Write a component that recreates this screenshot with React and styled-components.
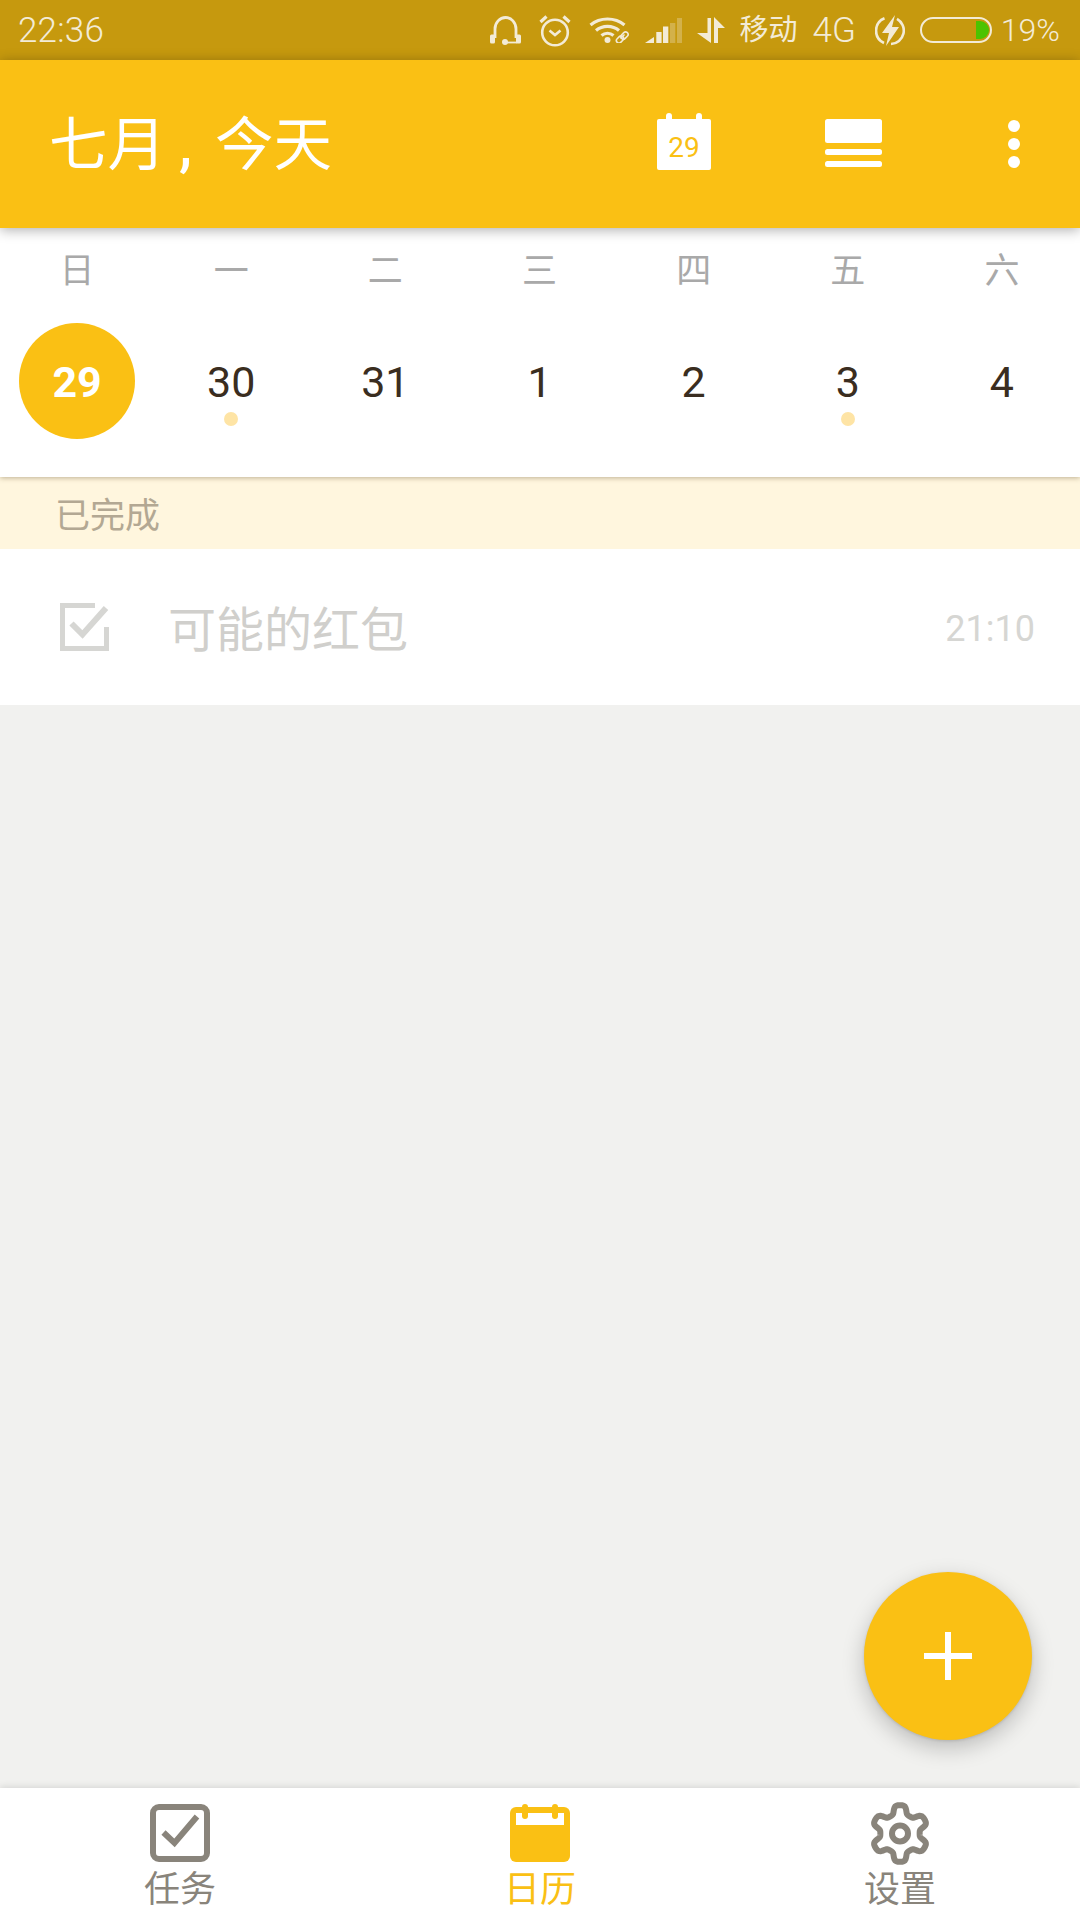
import React from 'react';
import styled, { createGlobalStyle } from 'styled-components';

const YELLOW = '#fac014';
const GREY_ICON = '#89847b';
const STATUS_INK = '#f3ebd6';

const GlobalStyle = createGlobalStyle`
  html, body {
    margin: 0;
    padding: 0;
    background: #f1f1ef;
  }
  body {
    font-family: Roboto, "Noto Sans CJK SC", sans-serif;
  }
`;

const Page = styled.div`
  position: relative;
  width: 1080px;
  height: 1920px;
  display: flex;
  flex-direction: column;
  overflow: hidden;
`;

const StatusBar = styled.div`
  height: 60px;
  flex: none;
  display: flex;
  align-items: center;
  justify-content: space-between;
  padding: 0 20px 0 18px;
  background: #c6990e;
  color: ${STATUS_INK};
`;

const StatusTime = styled.span`
  font-size: 35px;
  font-weight: 300;
  letter-spacing: 0.2px;
`;

const StatusGroup = styled.div`
  display: flex;
  align-items: center;
`;

const StatusSlot = styled.span`
  display: flex;
  align-items: center;
  margin-left: ${props => props.$gap || 0}px;
  font-size: ${props => props.$size || 32}px;
  font-weight: ${props => props.$weight || 300};
  line-height: 1;
`;

const Header = styled.header`
  position: relative;
  z-index: 3;
  height: 168px;
  flex: none;
  display: flex;
  align-items: center;
  padding: 0 60px 0 49px;
  background: ${YELLOW};
  box-shadow: 0 2px 12px rgba(0, 0, 0, 0.32);
`;

const Title = styled.h1`
  flex: 1;
  margin: 0;
  padding-bottom: 10px;
  color: #fff;
  font-size: 58.5px;
  font-weight: 400;
  white-space: nowrap;
`;

const TitleComma = styled.span`
  margin: 0 23px 0 13px;
  font-weight: 500;
`;

const HeaderAction = styled.span`
  display: flex;
  margin-left: ${props => props.$gap || 0}px;
  margin-bottom: ${props => props.$lift || 0}px;
`;

const Calendar = styled.section`
  position: relative;
  z-index: 2;
  height: 249px;
  flex: none;
  background: #fff;
  box-shadow: 0 1px 5px rgba(70, 50, 10, 0.35);
`;

const WeekRow = styled.div`
  display: grid;
  grid-template-columns: repeat(7, 154.15px);
  height: 84px;
  align-items: end;
`;

const WeekDay = styled.span`
  text-align: center;
  color: #a9a9a9;
  font-size: 35px;
  line-height: 60px;
  height: 70px;
`;

const DayRow = styled.div`
  display: grid;
  grid-template-columns: repeat(7, 154.15px);
  margin-top: 11px;
`;

const DayCell = styled.div`
  position: relative;
  height: 116px;
  display: flex;
  align-items: center;
  justify-content: center;
`;

const DayNumber = styled.span`
  box-sizing: border-box;
  width: 116px;
  height: 116px;
  padding-top: 2px;
  display: flex;
  align-items: center;
  justify-content: center;
  border-radius: 50%;
  font-size: 43px;
  font-weight: ${props => (props.$today ? 700 : 400)};
  color: ${props => (props.$today ? '#fff' : '#3a2d20')};
  background: ${props => (props.$today ? YELLOW : 'transparent')};
`;

const EventDot = styled.span`
  position: absolute;
  left: 50%;
  top: 89px;
  width: 14px;
  height: 14px;
  margin-left: -7px;
  border-radius: 50%;
  background: #fee4a5;
`;

const Main = styled.main`
  flex: 1;
  background: #f1f1ef;
`;

const SectionLabel = styled.div`
  box-sizing: border-box;
  height: 72px;
  flex: none;
  display: flex;
  align-items: center;
  padding: 0 0 2px 55px;
  background: #fff6de;
  color: #b3a893;
  font-size: 35px;
`;

const TaskRow = styled.div`
  height: 156px;
  flex: none;
  display: flex;
  align-items: center;
  padding: 0 45px 0 60px;
  background: #fff;
`;

const TaskTitle = styled.span`
  flex: 1;
  margin-left: 59px;
  padding-bottom: 2px;
  color: #d0cfcc;
  font-size: 48px;
`;

const TaskTime = styled.span`
  padding-top: 3px;
  color: #d6d6d3;
  font-size: 36px;
`;

const Fab = styled.button`
  position: absolute;
  left: 864px;
  top: 1572px;
  width: 168px;
  height: 168px;
  padding: 0;
  border: 0;
  border-radius: 50%;
  display: flex;
  align-items: center;
  justify-content: center;
  background: ${YELLOW};
  box-shadow: 0 8px 22px rgba(0, 0, 0, 0.22), 0 1px 3px rgba(0, 0, 0, 0.12);
`;

const TabBar = styled.nav`
  position: relative;
  height: 132px;
  flex: none;
  display: grid;
  grid-template-columns: repeat(3, 1fr);
  background: #fff;
  box-shadow: 0 -1px 7px rgba(0, 0, 0, 0.12);
`;

const Tab = styled.div`
  display: flex;
  flex-direction: column;
  align-items: center;
  color: ${props => (props.$active ? YELLOW : GREY_ICON)};
`;

const TabIcon = styled.span`
  height: 64px;
  margin-top: 13px;
  display: flex;
  align-items: center;
  justify-content: center;
`;

const TabLabel = styled.span`
  margin-top: 6px;
  font-size: 36px;
  line-height: 38px;
`;

const HeadsetIcon = () => (
  <svg width="31" height="29" viewBox="0 0 31 29" fill="none">
    <path d="M5 22V13a10.500 11.500 0 0 1 21 0v9" stroke={STATUS_INK} strokeWidth="2.800" />
    <rect x="0" y="18.500" width="5" height="9" rx="1.500" fill={STATUS_INK} />
    <rect x="26" y="18.500" width="5" height="9" rx="1.500" fill={STATUS_INK} />
    <circle cx="15" cy="26" r="3" fill={STATUS_INK} />
    <path d="M15 26.500h12" stroke={STATUS_INK} strokeWidth="1.800" />
  </svg>
);

const AlarmIcon = () => (
  <svg width="32" height="33" viewBox="0 0 32 33" fill="none" stroke={STATUS_INK}>
    <circle cx="16" cy="18.500" r="12.800" strokeWidth="2.600" />
    <path d="M10.500 16.500l5.500 4.500 5.500-4.500" strokeWidth="2.600" />
    <path d="M1.500 8L7.500 2.500M30.500 8L24.500 2.500" strokeWidth="3.200" />
  </svg>
);

const WifiIcon = () => (
  <svg width="41" height="26" viewBox="0 0 41 26" fill="none" stroke={STATUS_INK}>
    <path d="M1.500 8C11 0 26 0 35.500 8" strokeWidth="3.200" />
    <path d="M7 13.500C13.500 8 23.500 8 30 13.500" strokeWidth="3.200" />
    <path d="M12.500 18.500C16 15.500 21 15.500 24.500 18.500" strokeWidth="3.200" />
    <circle cx="18.500" cy="23" r="3" fill={STATUS_INK} stroke="none" />
    <path d="M31.500 21.500l4-4" strokeWidth="1.600" />
    <rect x="33" y="14.500" width="5" height="8" rx="2.500" strokeWidth="1.600" transform="rotate(45 35.500 18.500)" />
    <rect x="28.500" y="18.500" width="5" height="8" rx="2.500" strokeWidth="1.600" transform="rotate(45 31 22.500)" />
  </svg>
);

const SignalIcon = () => (
  <svg width="37" height="25" viewBox="0 0 37 25" fill={STATUS_INK}>
    <path d="M0 25l9-6v6z" />
    <rect x="11.300" y="14" width="5.300" height="11" />
    <rect x="18" y="8.500" width="5.300" height="16.500" />
    <rect x="25" y="5" width="5.300" height="20" opacity="0.3" />
    <rect x="32" y="0" width="5" height="25" opacity="0.3" />
  </svg>
);

const ArrowsIcon = () => (
  <svg width="28" height="26" viewBox="0 0 28 26" fill={STATUS_INK}>
    <path d="M14 26L0 16h10.500V1H14z" />
    <path d="M17 26V0l11 11h-7v15z" />
  </svg>
);

const BoltIcon = () => (
  <svg width="30" height="31" viewBox="0 0 30 31" fill="none">
    <path d="M9.500 3.200A13.500 13.500 0 0 0 9 28M22 3.800A13.500 13.500 0 0 1 16 29" stroke={STATUS_INK} strokeWidth="2.600" />
    <path d="M20 0L7 18h7l-3 13 13-19h-7l3-12z" fill={STATUS_INK} />
  </svg>
);

const BatteryIcon = () => (
  <svg width="72" height="26" viewBox="0 0 72 26" fill="none">
    <path d="M56 4h4a9 9 0 0 1 0 18h-4z" fill="#4cc300" />
    <rect x="1" y="1" width="70" height="24" rx="12" stroke={STATUS_INK} strokeWidth="2" />
  </svg>
);

const DateIcon = () => (
  <svg width="54" height="57" viewBox="0 0 54 57">
    <rect x="0" y="6" width="54" height="51" rx="2" fill="#fff" />
    <rect x="9" y="0" width="6" height="12" rx="3" fill="#fff" />
    <rect x="39" y="0" width="6" height="12" rx="3" fill="#fff" />
    <text x="27" y="44" textAnchor="middle" fontFamily="Roboto" fontSize="28" fill={YELLOW}>29</text>
  </svg>
);

const LayoutIcon = () => (
  <svg width="57" height="48" viewBox="0 0 57 48" fill="#fff">
    <rect x="0" y="0" width="57" height="24" rx="2.500" />
    <rect x="0" y="30" width="57" height="6" rx="2.500" />
    <rect x="0" y="42" width="57" height="6" rx="2.500" />
  </svg>
);

const MoreIcon = () => (
  <svg width="12" height="48" viewBox="0 0 12 48" fill="#fff">
    <circle cx="6" cy="6" r="6" />
    <circle cx="6" cy="24" r="6" />
    <circle cx="6" cy="42" r="6" />
  </svg>
);

const DoneCheckIcon = () => (
  <svg width="49" height="48" viewBox="0 0 49 48" fill="none" stroke="#d6d6d3" strokeWidth="5">
    <path d="M35 2.500H2.500V45.500H46.500V24" />
    <path d="M11.500 20.500l11 11L46 5" strokeWidth="6" />
  </svg>
);

const PlusIcon = () => (
  <svg width="48" height="48" viewBox="0 0 48 48" fill="#fff">
    <rect x="21" y="0" width="6" height="48" />
    <rect x="0" y="21" width="48" height="6" />
  </svg>
);

const TaskTabIcon = () => (
  <svg width="60" height="58" viewBox="0 0 60 58" fill="none" stroke={GREY_ICON}>
    <rect x="3" y="3" width="54" height="52" rx="6" strokeWidth="6" />
    <path d="M13.500 28.500l11 10.500L47 12.500" strokeWidth="6" />
  </svg>
);

const CalendarTabIcon = () => (
  <svg width="60" height="58" viewBox="0 0 60 58">
    <rect x="0" y="3" width="60" height="55" rx="6" fill={YELLOW} />
    <rect x="6" y="9" width="48" height="12" fill="#fff" />
    <rect x="12" y="0" width="6" height="15" rx="3" fill={YELLOW} />
    <rect x="42" y="0" width="6" height="15" rx="3" fill={YELLOW} />
  </svg>
);

// six blunt teeth, traced around the centre so the outline stays smooth
const gearPath = (() => {
  const points = [];
  for (let i = 0; i < 180; i += 1) {
    const angle = (i / 180) * Math.PI * 2;
    const wave = Math.cos(6 * (angle - Math.PI / 2));
    const radius = 24 + 4.5 * Math.tanh(wave * 2);
    points.push(`${(30 + radius * Math.cos(angle)).toFixed(2)} ${(31.5 + radius * Math.sin(angle)).toFixed(2)}`);
  }
  return `M${points.join('L')}Z`;
})();

const GearIcon = () => (
  <svg width="60" height="63" viewBox="0 0 60 63" fill="none" stroke={GREY_ICON} strokeWidth="6">
    <path d={gearPath} strokeLinejoin="round" />
    <circle cx="30" cy="31.500" r="8" />
  </svg>
);

const weekDays = ['日', '一', '二', '三', '四', '五', '六'];
const days = [
  { label: '29', today: true },
  { label: '30', dot: true },
  { label: '31' },
  { label: '1' },
  { label: '2' },
  { label: '3', dot: true },
  { label: '4' },
];

const App = () => (
  <Page>
    <GlobalStyle />
    <StatusBar>
      <StatusTime>22:36</StatusTime>
      <StatusGroup>
        <StatusSlot><HeadsetIcon /></StatusSlot>
        <StatusSlot $gap={18}><AlarmIcon /></StatusSlot>
        <StatusSlot $gap={18}><WifiIcon /></StatusSlot>
        <StatusSlot $gap={15}><SignalIcon /></StatusSlot>
        <StatusSlot $gap={15}><ArrowsIcon /></StatusSlot>
        <StatusSlot $gap={14} $size={29} $weight={400}>移动</StatusSlot>
        <StatusSlot $gap={15} $size={35}>4G</StatusSlot>
        <StatusSlot $gap={19}><BoltIcon /></StatusSlot>
        <StatusSlot $gap={15}><BatteryIcon /></StatusSlot>
        <StatusSlot $gap={9} $size={32}>19%</StatusSlot>
      </StatusGroup>
    </StatusBar>
    <Header>
      <Title>七月<TitleComma>,</TitleComma>今天</Title>
      <HeaderAction $lift={5}><DateIcon /></HeaderAction>
      <HeaderAction $gap={114} $lift={2}><LayoutIcon /></HeaderAction>
      <HeaderAction $gap={126}><MoreIcon /></HeaderAction>
    </Header>
    <Calendar>
      <WeekRow>
        {weekDays.map(day => <WeekDay key={day}>{day}</WeekDay>)}
      </WeekRow>
      <DayRow>
        {days.map(day => (
          <DayCell key={day.label}>
            <DayNumber $today={day.today}>{day.label}</DayNumber>
            {day.dot && <EventDot />}
          </DayCell>
        ))}
      </DayRow>
    </Calendar>
    <SectionLabel>已完成</SectionLabel>
    <TaskRow>
      <DoneCheckIcon />
      <TaskTitle>可能的红包</TaskTitle>
      <TaskTime>21:10</TaskTime>
    </TaskRow>
    <Main />
    <Fab aria-label="add"><PlusIcon /></Fab>
    <TabBar>
      <Tab>
        <TabIcon><TaskTabIcon /></TabIcon>
        <TabLabel>任务</TabLabel>
      </Tab>
      <Tab $active>
        <TabIcon><CalendarTabIcon /></TabIcon>
        <TabLabel>日历</TabLabel>
      </Tab>
      <Tab>
        <TabIcon><GearIcon /></TabIcon>
        <TabLabel>设置</TabLabel>
      </Tab>
    </TabBar>
  </Page>
);

export default App;
